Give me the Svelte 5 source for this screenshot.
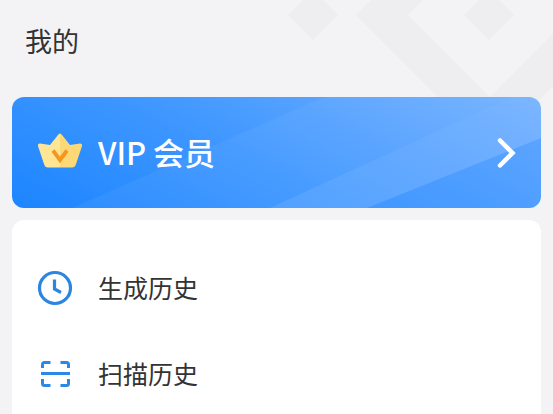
<script>
  const rows = [
    { label: '生成历史', icon: 'clock' },
    { label: '扫描历史', icon: 'scan' }
  ];
</script>

<div class="page">
  <svg class="decor" width="553" height="414" viewBox="0 0 553 414" aria-hidden="true">
    <path d="M313 -10 L338 15 L313 40 L288 15 Z" />
    <path d="M489 -10 L514 15 L489 40 L464 15 Z" />
    <path d="M356 15 L390 -19 L442 -19 L408 15 L490 97 L553 34 L553 86 L490 149 Z" />
  </svg>

  <h1 class="title">我的</h1>

  <button class="vip" type="button">
    <svg class="bands" viewBox="0 0 529 111" preserveAspectRatio="none" aria-hidden="true">
      <defs>
        <linearGradient id="band-fade" x1="0" y1="1" x2="1" y2="0">
          <stop offset="0" stop-color="#fff" stop-opacity="0.09" />
          <stop offset="1" stop-color="#fff" stop-opacity="0.01" />
        </linearGradient>
      </defs>
      <path d="M60 111 L312 0 L529 0 L529 111 Z" fill="#fff" opacity="0.05" />
      <path d="M258 111 L500 0 L529 0 L529 41 L355 111 Z" fill="url(#band-fade)" />
      <path d="M355 111 L529 41 L529 111 Z" fill="#2a8bff" opacity="0.3" />
    </svg>
    <svg class="crown" width="46" height="35" viewBox="0 0 46 35" aria-hidden="true">
      <path d="M23 0.500 Q24 0.500 25 2 L33 12 L43 10.500 Q45.500 10.500 45 13 L39 31 Q38 34.500 35 34.500 L23 34.500 Z" fill="#fdd877" />
      <path d="M23 0.500 Q22 0.500 21 2 L13 12 L3 10.500 Q0.500 10.500 1 13 L7 31 Q8 34.500 11 34.500 L23 34.500 Z" fill="#fee694" />
      <path d="M16 17.500 L23 27 L30 17.500" fill="none" stroke="#f5961f" stroke-width="3.800" />
    </svg>
    <span class="vip-label">VIP 会员</span>
    <svg class="chevron" width="20" height="30" viewBox="0 0 20 30" aria-hidden="true">
      <path d="M3 2.500 L15.500 15 L3 27.500" fill="none" stroke="#fff" stroke-width="4.500" stroke-linecap="round" />
    </svg>
  </button>

  <div class="list">
    {#each rows as row}
      <div class="row">
        {#if row.icon === 'clock'}
          <svg class="row-icon" width="36" height="36" viewBox="0 0 36 36" aria-hidden="true">
            <circle cx="18" cy="18" r="15.500" fill="none" stroke="#2c86e0" stroke-width="3.200" />
            <path d="M17.500 9.500 V19 L24 22.500" fill="none" stroke="#2c86e0" stroke-width="3.200" />
          </svg>
        {:else}
          <svg class="row-icon" width="36" height="36" viewBox="0 0 36 36" aria-hidden="true">
            <path d="M13.500 6.500 H7.500 Q5.500 6.500 5.500 8.500 V12 M23.500 6.500 H29.500 Q31.500 6.500 31.500 8.500 V12 M5.500 23 V27.500 Q5.500 29.500 7.500 29.500 H13.500 M31.500 23 V27.500 Q31.500 29.500 29.500 29.500 H23.500" fill="none" stroke="#2a88e6" stroke-width="3" />
            <path d="M4 17.500 H33" stroke="#2a88e6" stroke-width="3" />
          </svg>
        {/if}
        <span>{row.label}</span>
      </div>
    {/each}
  </div>
</div>

<style>
  :global(body) {
    margin: 0;
    background: #f2f3f5;
  }

  .page {
    position: relative;
    box-sizing: border-box;
    width: 553px;
    height: 414px;
    padding: 0 12px;
    overflow: hidden;
    font-family: 'Noto Sans CJK SC', 'Noto Sans', sans-serif;
    background: #f3f3f5;
  }

  .decor {
    position: absolute;
    inset: 0;
    fill: #eeeef0;
  }

  .title {
    position: relative;
    margin: 0;
    padding: 22px 0 0 13px;
    height: 97px;
    box-sizing: border-box;
    font-size: 27px;
    line-height: 38px;
    font-weight: 400;
    color: #333;
  }

  .vip {
    position: relative;
    display: flex;
    align-items: center;
    box-sizing: border-box;
    width: 529px;
    height: 111px;
    padding: 0 24px 0 25px;
    border: 0;
    border-radius: 12px;
    overflow: hidden;
    font: inherit;
    color: #fff;
    background: linear-gradient(207deg, #74b1ff 0%, #3f97ff 55%, #1c85ff 100%);
  }

  .bands {
    position: absolute;
    inset: 0;
    width: 100%;
    height: 100%;
  }

  .crown {
    position: relative;
    margin-bottom: 5px;
  }

  .vip-label {
    position: relative;
    margin: 0 0 2px 15px;
    font-size: 31px;
    line-height: 40px;
    font-weight: 500;
  }

  .chevron {
    position: relative;
    margin-left: auto;
  }

  .list {
    position: relative;
    box-sizing: border-box;
    height: 300px;
    margin-top: 12px;
    padding-top: 25px;
    border-radius: 12px;
    background: #fff;
  }

  .row {
    display: flex;
    align-items: center;
    height: 86px;
    padding-left: 25px;
    font-size: 25px;
    color: #333;
  }

  .row span {
    margin: 0 0 2px 25px;
  }
</style>
